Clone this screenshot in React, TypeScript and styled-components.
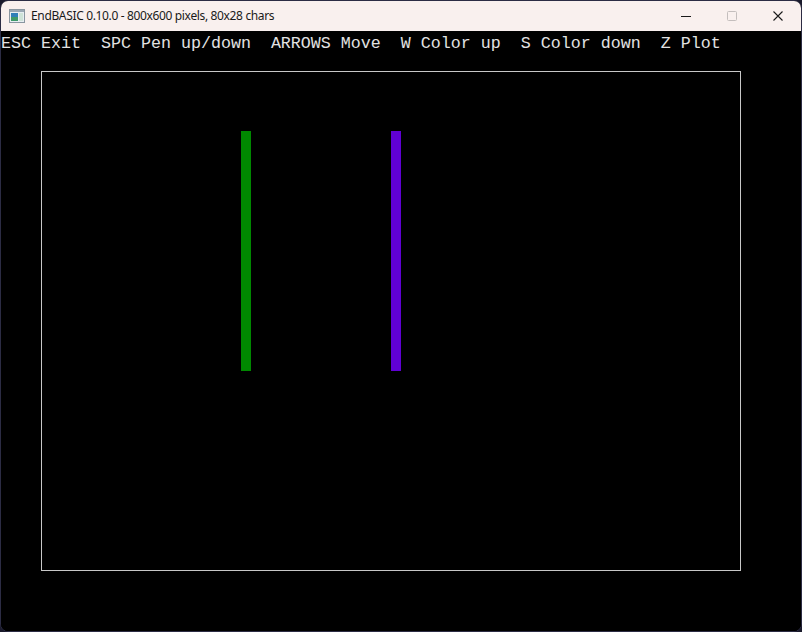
import { type FC } from "react";
import styled, { createGlobalStyle } from "styled-components";

const COLS = 80;
const ROWS = 28;
const SCREEN_W = 800;
const SCREEN_H = 600;
const ROW_H = SCREEN_H / ROWS;

const GlobalStyle = createGlobalStyle`
  html, body {
    margin: 0;
    padding: 0;
    background: #1a1a2c;
  }
`;

const StyledWindow = styled.div`
  width: 802px;
  height: 632px;
  box-sizing: border-box;
  border: 1px solid #2c2c44;
  border-radius: 8px;
  overflow: hidden;
  display: flex;
  flex-direction: column;
  background: #000;
`;

const StyledTitleBar = styled.div`
  height: 30px;
  flex: none;
  display: flex;
  align-items: center;
  background: #f9f0ee;
  font-family: "Noto Sans", "Liberation Sans", sans-serif;
  font-size: 12px;
  color: #1a1a1a;
`;

const StyledAppIcon = styled.svg`
  margin: 0 6px 0 8px;
  flex: none;
`;

const StyledTitle = styled.span`
  flex: 1;
  white-space: nowrap;
  letter-spacing: -0.35px;
  padding-bottom: 1px;
`;

const StyledCaptionButton = styled.div<{ $disabled?: boolean }>`
  width: 46px;
  height: 30px;
  display: flex;
  align-items: center;
  justify-content: center;
  color: ${({ $disabled }) => ($disabled ? "#c4bebd" : "#1a1a1a")};
`;

const StyledScreen = styled.div`
  width: ${SCREEN_W}px;
  height: ${SCREEN_H}px;
  background: #000;
  display: flex;
  flex-direction: column;
`;

const StyledStatusLine = styled.div`
  height: ${ROW_H}px;
  flex: none;
  font-family: "Liberation Mono", "DejaVu Sans Mono", monospace;
  font-size: ${SCREEN_W / COLS / 0.6}px;
  line-height: ${ROW_H + 4}px;
  color: #e2e2e2;
  white-space: pre;
`;

const StyledCanvas = styled.svg`
  display: block;
  flex: 1;
`;

const STATUS =
  "ESC Exit  SPC Pen up/down  ARROWS Move  W Color up  S Color down  Z Plot";

interface Stroke {
  x: number;
  y: number;
  w: number;
  h: number;
  color: string;
}

const strokes: Stroke[] = [
  { x: 240, y: 100, w: 10, h: 240, color: "#008800" },
  { x: 390, y: 100, w: 10, h: 240, color: "#6000d4" },
];

const AppIcon = () => (
  <StyledAppIcon width="16" height="14" viewBox="0 0 16 14">
    <rect x="0.5" y="0.5" width="15" height="13" fill="#e8eef2" stroke="#8a96a0" />
    <rect x="1" y="1" width="14" height="2" fill="#9aa8b4" />
    <rect x="2" y="4" width="7" height="8" fill="#2f7fb8" />
    <rect x="2" y="8" width="7" height="4" fill="#3f9a6a" />
    <rect x="10" y="4" width="4" height="8" fill="#cfe3d8" />
  </StyledAppIcon>
);

const CaptionButtons = () => (
  <>
    <StyledCaptionButton>
      <svg width="10" height="10" viewBox="0 0 10 10">
        <line x1="0" y1="5.5" x2="10" y2="5.5" stroke="currentColor" strokeWidth="1" />
      </svg>
    </StyledCaptionButton>
    <StyledCaptionButton $disabled>
      <svg width="10" height="10" viewBox="0 0 10 10">
        <rect x="0.5" y="0.5" width="9" height="9" rx="1" fill="none" stroke="currentColor" />
      </svg>
    </StyledCaptionButton>
    <StyledCaptionButton>
      <svg width="10" height="10" viewBox="0 0 10 10">
        <path d="M0.5 0.5 L9.5 9.5 M9.5 0.5 L0.5 9.5" stroke="currentColor" strokeWidth="1.1" />
      </svg>
    </StyledCaptionButton>
  </>
);

const Canvas: FC = () => (
  <StyledCanvas
    width={SCREEN_W}
    height={SCREEN_H - ROW_H}
    viewBox={`0 ${ROW_H} ${SCREEN_W} ${SCREEN_H - ROW_H}`}
    shapeRendering="crispEdges"
  >
    <rect x="40.5" y="40.5" width="699" height="499" fill="none" stroke="#c8c8c8" />
    {strokes.map((s) => (
      <rect key={s.x} x={s.x} y={s.y} width={s.w} height={s.h} fill={s.color} />
    ))}
  </StyledCanvas>
);

export default function App() {
  return (
    <>
      <GlobalStyle />
      <StyledWindow>
        <StyledTitleBar>
          <AppIcon />
          <StyledTitle>EndBASIC 0.10.0 - 800x600 pixels, 80x28 chars</StyledTitle>
          <CaptionButtons />
        </StyledTitleBar>
        <StyledScreen>
          <StyledStatusLine>{STATUS}</StyledStatusLine>
          <Canvas />
        </StyledScreen>
      </StyledWindow>
    </>
  );
}
